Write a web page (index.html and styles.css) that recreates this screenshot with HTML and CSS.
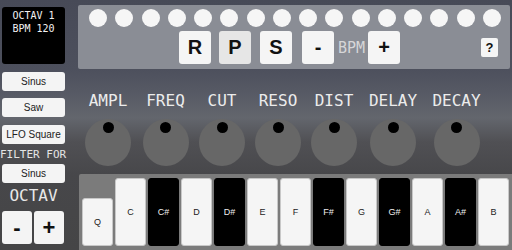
FILE: index.html
```html
<!DOCTYPE html>
<html lang="en">
<head>
    <meta charset="UTF-8">
    <meta name="viewport" content="width=device-width, initial-scale=1.0">
    <title>Synth</title>
    <link rel="stylesheet" href="styles.css">
</head>
<body>
    <div class="app">
        <div class="side">
            <div class="screen">
                <div>OCTAV 1</div>
                <div>BPM 120</div>
            </div>
            <div class="side-btn first">Sinus</div>
            <div class="side-btn second">Saw</div>
            <div class="side-btn third">LFO Square</div>
            <div class="filter-label">FILTER FOR</div>
            <div class="side-btn filter">Sinus</div>
            <div class="octav-label">OCTAV</div>
            <div class="octav-row">
                <div class="octav-btn">-</div>
                <div class="octav-btn">+</div>
            </div>
        </div>

        <div class="main">
            <div class="top-panel">
                <div class="dots">
                    <span class="dot"></span><span class="dot"></span><span class="dot"></span><span class="dot"></span>
                    <span class="dot"></span><span class="dot"></span><span class="dot"></span><span class="dot"></span>
                    <span class="dot"></span><span class="dot"></span><span class="dot"></span><span class="dot"></span>
                    <span class="dot"></span><span class="dot"></span><span class="dot"></span><span class="dot"></span>
                </div>
                <div class="controls">
                    <div class="big-btn">R</div>
                    <div class="big-btn pressed btn-p">P</div>
                    <div class="big-btn btn-s">S</div>
                    <div class="big-btn btn-minus">-</div>
                    <div class="bpm-label">BPM</div>
                    <div class="big-btn">+</div>
                    <div class="help-btn">?</div>
                </div>
            </div>

            <div class="knobs">
                <div class="knob-col"><div class="knob-label">AMPL</div><div class="knob"><span class="knob-dot"></span></div></div>
                <div class="knob-col"><div class="knob-label">FREQ</div><div class="knob"><span class="knob-dot"></span></div></div>
                <div class="knob-col"><div class="knob-label">CUT</div><div class="knob"><span class="knob-dot"></span></div></div>
                <div class="knob-col"><div class="knob-label">RESO</div><div class="knob"><span class="knob-dot"></span></div></div>
                <div class="knob-col"><div class="knob-label">DIST</div><div class="knob"><span class="knob-dot"></span></div></div>
                <div class="knob-col"><div class="knob-label">DELAY</div><div class="knob"><span class="knob-dot"></span></div></div>
                <div class="knob-col"><div class="knob-label">DECAY</div><div class="knob"><span class="knob-dot"></span></div></div>
            </div>

            <div class="keyboard">
                <div class="key short">Q</div>
                <div class="key">C</div>
                <div class="key black">C#</div>
                <div class="key">D</div>
                <div class="key black">D#</div>
                <div class="key">E</div>
                <div class="key">F</div>
                <div class="key black">F#</div>
                <div class="key">G</div>
                <div class="key black">G#</div>
                <div class="key">A</div>
                <div class="key black">A#</div>
                <div class="key">B</div>
            </div>
        </div>
    </div>
</body>
</html>
```

FILE: styles.css
```css
body {
    margin: 0;
    width: 512px;
    height: 250px;
    overflow: hidden;
    font-family: "Liberation Sans", Arial, sans-serif;
    background: linear-gradient(to bottom, #474a57 0, #4d505d 70px, #5a5d67 100px, #63666d 118px, #505054 142px, #47474a 175px, #454546 250px);
}
.app {
    display: flex;
    height: 250px;
}
.side {
    width: 63px;
    margin-left: 2px;
    display: flex;
    flex-direction: column;
}
.screen {
    margin-top: 7px;
    height: 57px;
    box-sizing: border-box;
    padding-top: 2px;
    background: #000;
    border-radius: 3px;
    color: #f2f2f2;
    font-family: "DejaVu Sans Mono", monospace;
    font-size: 10px;
    line-height: 13px;
    text-align: center;
}
.side-btn {
    height: 19px;
    background: #f4f4f4;
    border-radius: 3px;
    color: #222;
    font-size: 10px;
    display: flex;
    align-items: center;
    justify-content: center;
}
.side-btn.first {
    margin-top: 8px;
}
.side-btn.second {
    margin-top: 7px;
}
.side-btn.third {
    margin-top: 8px;
}
.side-btn.filter {
    margin-top: 3px;
}
.filter-label {
    margin-top: 4px;
    margin-left: -2px;
    font-family: "DejaVu Sans Mono", monospace;
    font-size: 11px;
    line-height: 13px;
    color: #e4e4e4;
    white-space: nowrap;
}
.octav-label {
    margin-top: 4px;
    font-family: "DejaVu Sans Mono", monospace;
    font-size: 16px;
    line-height: 18px;
    color: #e8e8e8;
    text-align: center;
}
.octav-row {
    margin-top: 6px;
    display: flex;
    gap: 2px;
}
.octav-btn {
    width: 30px;
    height: 33px;
    background: #f4f4f4;
    border-radius: 3px;
    color: #111;
    font-size: 22px;
    font-weight: bold;
    display: flex;
    align-items: center;
    justify-content: center;
}
.main {
    flex: 1;
    margin-left: 13px;
    display: flex;
    flex-direction: column;
}
.top-panel {
    margin-top: 5px;
    width: 432px;
    height: 64px;
    box-sizing: border-box;
    padding: 4px 9px 0 11px;
    background: #8a8d95;
    border-radius: 2px;
}
.dots {
    display: flex;
    gap: 8.27px;
}
.dot {
    width: 18px;
    height: 18px;
    border-radius: 50%;
    background: #f6f6f6;
}
.controls {
    margin-top: 4px;
    height: 33px;
    padding-left: 90px;
    display: flex;
    align-items: center;
}
.big-btn {
    width: 32px;
    height: 33px;
    background: #f5f5f5;
    border-radius: 3px;
    color: #111;
    font-size: 20px;
    font-weight: bold;
    display: flex;
    align-items: center;
    justify-content: center;
}
.big-btn.pressed {
    background: #e6e6e6;
}
.btn-p {
    margin-left: 8px;
}
.btn-s {
    margin-left: 9px;
}
.btn-minus {
    margin-left: 10px;
}
.bpm-label {
    margin: 0 3px 0 4px;
    font-family: "DejaVu Sans Mono", monospace;
    font-size: 15px;
    color: #d6d6d8;
}
.help-btn {
    margin-left: auto;
    margin-right: 3px;
    width: 17px;
    height: 19px;
    background: #f5f5f5;
    border-radius: 2px;
    color: #111;
    font-size: 13px;
    font-weight: bold;
    display: flex;
    align-items: center;
    justify-content: center;
}
.knobs {
    height: 105px;
    margin-left: 1px;
    display: grid;
    grid-template-columns: 58px 57px 56px 56px 56px 62px 65px;
}
.knob-col {
    display: flex;
    flex-direction: column;
    align-items: center;
}
.knob-label {
    margin-top: 22px;
    font-family: "DejaVu Sans Mono", monospace;
    font-size: 16px;
    line-height: 19px;
    color: #ececec;
}
.knob {
    margin-top: 9px;
    width: 46px;
    height: 47px;
    box-sizing: border-box;
    padding-top: 3px;
    border-radius: 50%;
    background: #676767;
    display: flex;
    justify-content: center;
}
.knob-dot {
    width: 11px;
    height: 11px;
    border-radius: 50%;
    background: #000;
}
.keyboard {
    height: 76px;
    margin-left: 1px;
    box-sizing: border-box;
    padding: 4px 3px;
    background: #7b7b7b;
    border-radius: 2px 0 0 0;
    display: flex;
    align-items: flex-end;
    gap: 2px;
}
.key {
    width: 31px;
    height: 68px;
    box-sizing: border-box;
    background: #f5f5f5;
    border: 1px solid #c8c8c8;
    border-radius: 3px;
    color: #222;
    font-size: 9px;
    display: flex;
    align-items: center;
    justify-content: center;
}
.key.short {
    height: 48px;
}
.key.black {
    background: #000;
    border-color: #000;
    color: #eee;
}
```
